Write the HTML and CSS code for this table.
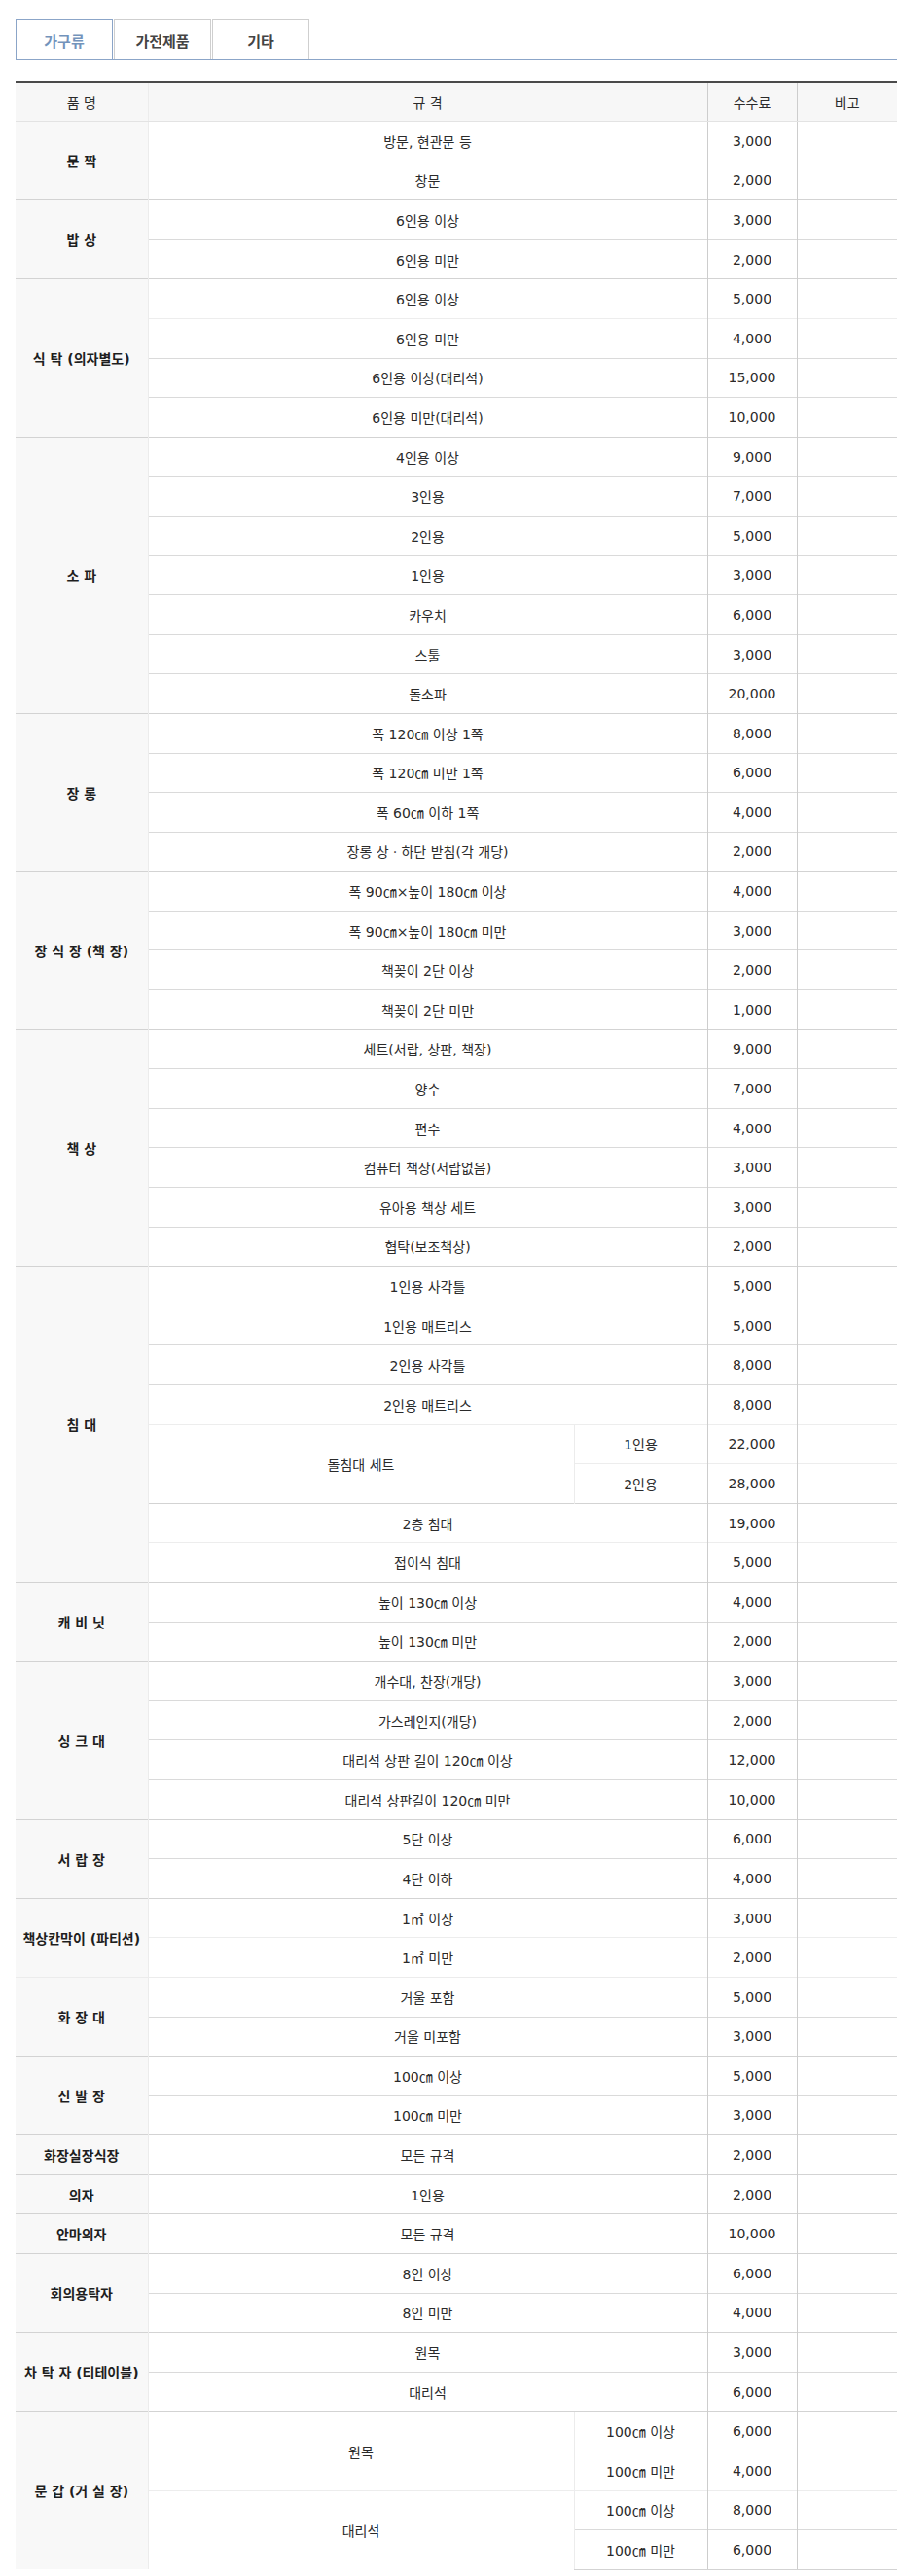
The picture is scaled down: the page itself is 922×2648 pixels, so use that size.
FILE: index.html
```html
<!DOCTYPE html>
<html lang="ko">
<head>
<meta charset="utf-8">
<title>대형폐기물 수수료</title>
<link rel="stylesheet" href="styles.css">
</head>
<body>
<div class="wrap">
  <ul class="tabs">
    <li class="tab on">가구류</li>
    <li class="tab">가전제품</li>
    <li class="tab">기타</li>
  </ul>
  <table class="fee">
    <colgroup>
      <col class="c1"><col class="c2a"><col class="c2b"><col class="c3"><col class="c4">
    </colgroup>
    <thead>
      <tr><th>품 명</th><th colspan="2" class="spec">규 격</th><th class="num">수수료</th><th>비고</th></tr>
    </thead>
    <tbody>
      <tr class="grp"><th rowspan="2">문 짝</th><td colspan="2">방문, 현관문 등</td><td class="num">3,000</td><td></td></tr>
      <tr><td colspan="2">창문</td><td class="num">2,000</td><td></td></tr>

      <tr class="grp"><th rowspan="2">밥 상</th><td colspan="2">6인용 이상</td><td class="num">3,000</td><td></td></tr>
      <tr><td colspan="2">6인용 미만</td><td class="num">2,000</td><td></td></tr>

      <tr class="grp"><th rowspan="4">식 탁 (의자별도)</th><td colspan="2">6인용 이상</td><td class="num">5,000</td><td></td></tr>
      <tr class="soft"><td colspan="2">6인용 미만</td><td class="num">4,000</td><td></td></tr>
      <tr><td colspan="2">6인용 이상(대리석)</td><td class="num">15,000</td><td></td></tr>
      <tr><td colspan="2">6인용 미만(대리석)</td><td class="num">10,000</td><td></td></tr>

      <tr class="grp"><th rowspan="7">소 파</th><td colspan="2">4인용 이상</td><td class="num">9,000</td><td></td></tr>
      <tr><td colspan="2">3인용</td><td class="num">7,000</td><td></td></tr>
      <tr><td colspan="2">2인용</td><td class="num">5,000</td><td></td></tr>
      <tr><td colspan="2">1인용</td><td class="num">3,000</td><td></td></tr>
      <tr><td colspan="2">카우치</td><td class="num">6,000</td><td></td></tr>
      <tr><td colspan="2">스툴</td><td class="num">3,000</td><td></td></tr>
      <tr><td colspan="2">돌소파</td><td class="num">20,000</td><td></td></tr>

      <tr class="grp"><th rowspan="4">장 롱</th><td colspan="2">폭 120㎝ 이상 1쪽</td><td class="num">8,000</td><td></td></tr>
      <tr><td colspan="2">폭 120㎝ 미만 1쪽</td><td class="num">6,000</td><td></td></tr>
      <tr><td colspan="2">폭 60㎝ 이하 1쪽</td><td class="num">4,000</td><td></td></tr>
      <tr><td colspan="2">장롱 상ㆍ하단 받침(각 개당)</td><td class="num">2,000</td><td></td></tr>

      <tr class="grp"><th rowspan="4">장 식 장 (책 장)</th><td colspan="2">폭 90㎝×높이 180㎝ 이상</td><td class="num">4,000</td><td></td></tr>
      <tr><td colspan="2">폭 90㎝×높이 180㎝ 미만</td><td class="num">3,000</td><td></td></tr>
      <tr><td colspan="2">책꽂이 2단 이상</td><td class="num">2,000</td><td></td></tr>
      <tr><td colspan="2">책꽂이 2단 미만</td><td class="num">1,000</td><td></td></tr>

      <tr class="grp"><th rowspan="6">책 상</th><td colspan="2">세트(서랍, 상판, 책장)</td><td class="num">9,000</td><td></td></tr>
      <tr><td colspan="2">양수</td><td class="num">7,000</td><td></td></tr>
      <tr><td colspan="2">편수</td><td class="num">4,000</td><td></td></tr>
      <tr><td colspan="2">컴퓨터 책상(서랍없음)</td><td class="num">3,000</td><td></td></tr>
      <tr><td colspan="2">유아용 책상 세트</td><td class="num">3,000</td><td></td></tr>
      <tr><td colspan="2">협탁(보조책상)</td><td class="num">2,000</td><td></td></tr>

      <tr class="grp"><th rowspan="8">침 대</th><td colspan="2">1인용 사각틀</td><td class="num">5,000</td><td></td></tr>
      <tr><td colspan="2">1인용 매트리스</td><td class="num">5,000</td><td></td></tr>
      <tr><td colspan="2">2인용 사각틀</td><td class="num">8,000</td><td></td></tr>
      <tr><td colspan="2">2인용 매트리스</td><td class="num">8,000</td><td></td></tr>
      <tr class="soft"><td rowspan="2" class="sub">돌침대 세트</td><td class="sub">1인용</td><td class="num">22,000</td><td></td></tr>
      <tr class="soft"><td class="sub">2인용</td><td class="num">28,000</td><td></td></tr>
      <tr class="grp"><td colspan="2">2층 침대</td><td class="num">19,000</td><td></td></tr>
      <tr class="soft"><td colspan="2">접이식 침대</td><td class="num">5,000</td><td></td></tr>

      <tr class="grp"><th rowspan="2">캐 비 닛</th><td colspan="2">높이 130㎝ 이상</td><td class="num">4,000</td><td></td></tr>
      <tr><td colspan="2">높이 130㎝ 미만</td><td class="num">2,000</td><td></td></tr>

      <tr class="grp"><th rowspan="4">싱 크 대</th><td colspan="2">개수대, 찬장(개당)</td><td class="num">3,000</td><td></td></tr>
      <tr><td colspan="2">가스레인지(개당)</td><td class="num">2,000</td><td></td></tr>
      <tr><td colspan="2">대리석 상판 길이 120㎝ 이상</td><td class="num">12,000</td><td></td></tr>
      <tr><td colspan="2">대리석 상판길이 120㎝ 미만</td><td class="num">10,000</td><td></td></tr>

      <tr class="grp"><th rowspan="2">서 랍 장</th><td colspan="2">5단 이상</td><td class="num">6,000</td><td></td></tr>
      <tr><td colspan="2">4단 이하</td><td class="num">4,000</td><td></td></tr>

      <tr class="grp"><th rowspan="2">책상칸막이 (파티션)</th><td colspan="2">1㎡ 이상</td><td class="num">3,000</td><td></td></tr>
      <tr class="soft"><td colspan="2">1㎡ 미만</td><td class="num">2,000</td><td></td></tr>

      <tr class="grp soft"><th rowspan="2">화 장 대</th><td colspan="2">거울 포함</td><td class="num">5,000</td><td></td></tr>
      <tr><td colspan="2">거울 미포함</td><td class="num">3,000</td><td></td></tr>

      <tr class="grp"><th rowspan="2">신 발 장</th><td colspan="2">100㎝ 이상</td><td class="num">5,000</td><td></td></tr>
      <tr><td colspan="2">100㎝ 미만</td><td class="num">3,000</td><td></td></tr>

      <tr class="grp"><th>화장실장식장</th><td colspan="2">모든 규격</td><td class="num">2,000</td><td></td></tr>
      <tr class="grp"><th>의자</th><td colspan="2">1인용</td><td class="num">2,000</td><td></td></tr>
      <tr class="grp"><th>안마의자</th><td colspan="2">모든 규격</td><td class="num">10,000</td><td></td></tr>

      <tr class="grp"><th rowspan="2">회의용탁자</th><td colspan="2">8인 이상</td><td class="num">6,000</td><td></td></tr>
      <tr><td colspan="2">8인 미만</td><td class="num">4,000</td><td></td></tr>

      <tr class="grp"><th rowspan="2">차 탁 자 (티테이블)</th><td colspan="2">원목</td><td class="num">3,000</td><td></td></tr>
      <tr><td colspan="2">대리석</td><td class="num">6,000</td><td></td></tr>

      <tr class="grp"><th rowspan="4">문 갑 (거 실 장)</th><td rowspan="2" class="sub">원목</td><td class="sub">100㎝ 이상</td><td class="num">6,000</td><td></td></tr>
      <tr><td class="sub">100㎝ 미만</td><td class="num">4,000</td><td></td></tr>
      <tr class="soft"><td rowspan="2" class="sub">대리석</td><td class="sub">100㎝ 이상</td><td class="num">8,000</td><td></td></tr>
      <tr><td class="sub">100㎝ 미만</td><td class="num">6,000</td><td></td></tr>
    </tbody>
  </table>
</div>
</body>
</html>
```
FILE: styles.css
```css
html, body {
  margin: 0;
  padding: 0;
  background: #fff;
}
body {
  font-family: "DejaVu Sans", "Noto Sans CJK KR", sans-serif;
  font-size: 14px;
  color: #2a2a2a;
}
.wrap {
  padding: 20px 0 0 16px;
}
.tabs {
  list-style: none;
  margin: 0;
  padding: 0;
  display: flex;
  gap: 1px;
  border-bottom: 1px solid #8ba5c8;
}
.tab {
  box-sizing: border-box;
  width: 100px;
  height: 41px;
  border: 1px solid #cfcfcf;
  border-bottom: 0;
  display: flex;
  align-items: center;
  justify-content: center;
  font-family: "Noto Sans CJK KR", sans-serif;
  font-size: 15px;
  font-weight: 700;
  color: #444;
}
.tab.on {
  border-color: #8ba5c8;
  color: #7393bb;
}
.fee {
  margin-top: 21px;
  width: 906px;
  border-collapse: collapse;
  table-layout: fixed;
  border-top: 2px solid #4a4a4a;
}
.c1 { width: 136px; }
.c2a { width: 438px; }
.c2b { width: 137px; }
.c3 { width: 92px; }
.c4 { width: 103px; }
.fee th, .fee td {
  padding: 0;
  height: 39.6px;
  text-align: center;
  vertical-align: middle;
  border-top: 1px solid #dadada;
  border-left: 1px solid #cdcdcd;
}
.fee thead th {
  height: 39px;
  background: #f7f7f7;
  font-weight: 400;
  color: #2a2a2a;
  border-top: 2px solid #4a4a4a;
  border-bottom: 1px solid #e3e3e3;
}
.fee thead th:first-child,
.fee thead th.spec {
  border-left-color: #ececec;
}
.fee tbody th {
  background: #f8f8f8;
  font-weight: 700;
  color: #1e1e1e;
  border-left: 0;
  border-right: 1px solid #ececec;
}
.fee thead th:first-child {
  border-left: 0;
}
.fee tbody tr.soft td {
  border-top-color: #ededed;
}
.fee tbody tr.grp > * {
  border-top-color: #d3d3d3;
}
.fee tbody tr.grp.soft > * {
  border-top-color: #ececec;
}
.fee td.sub + td.sub,
.fee tr td.sub:first-child {
  border-left-color: #ececec;
}
.fee tbody tr:last-child td,
.fee tbody tr:last-child th {
  border-bottom: 1px solid #d3d3d3;
}
```
